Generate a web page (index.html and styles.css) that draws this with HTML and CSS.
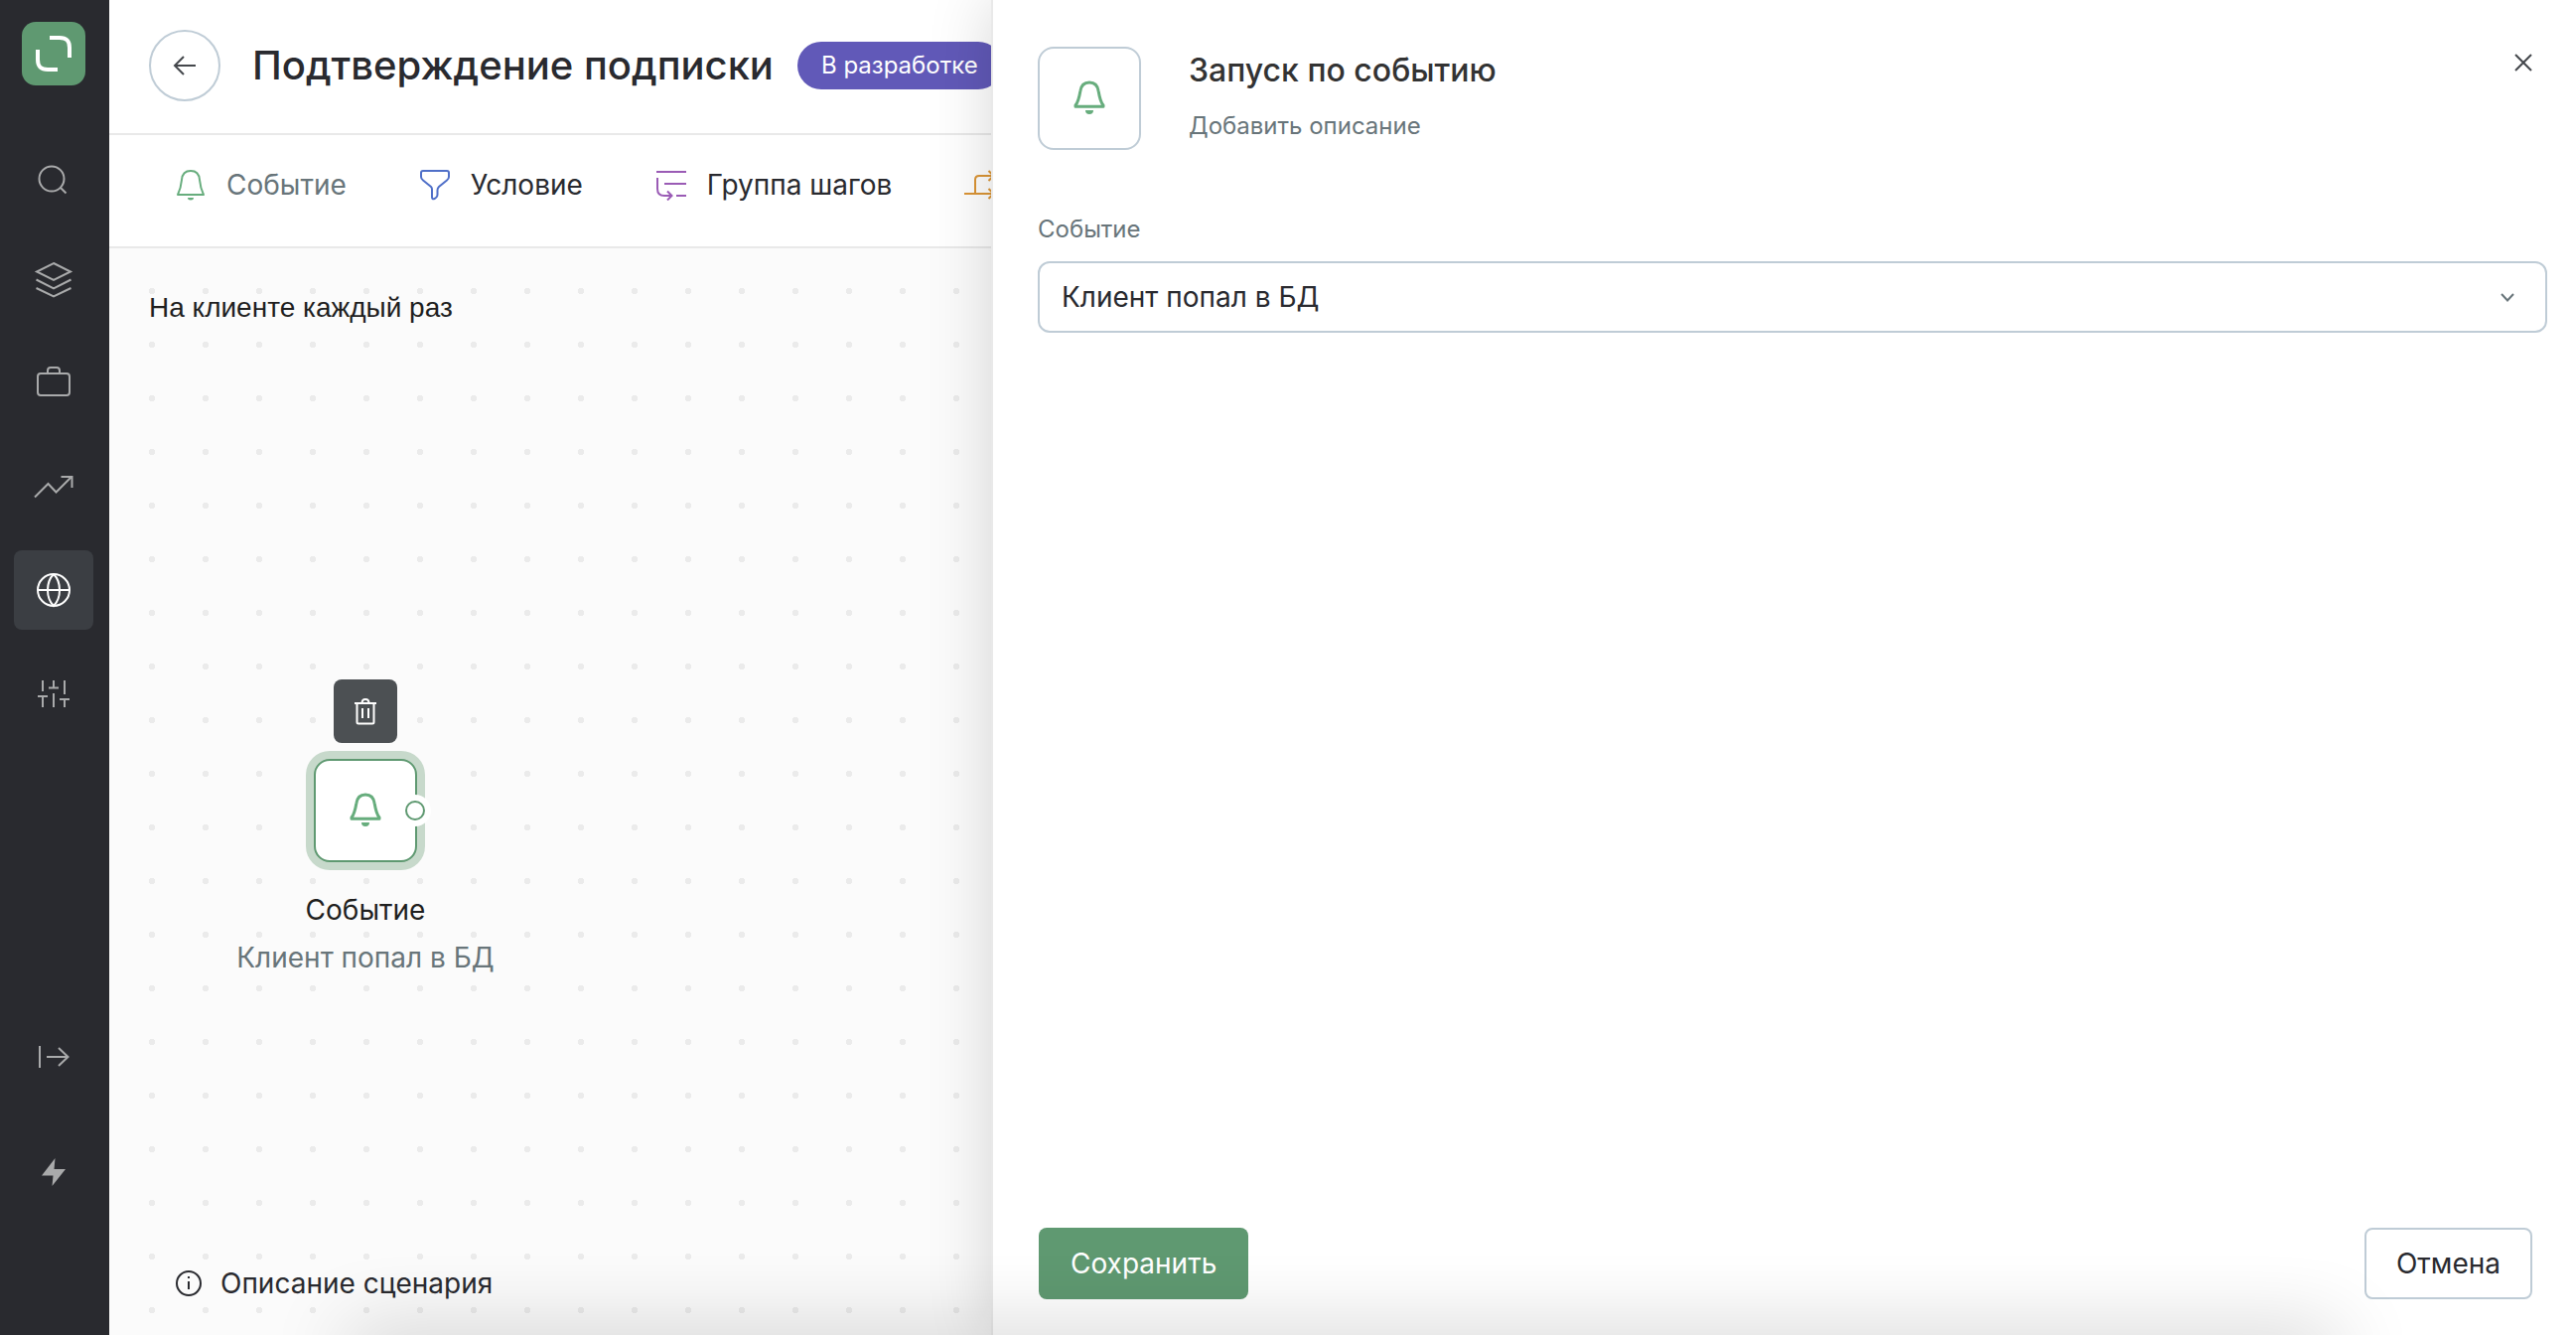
FILE: index.html
```html
<!DOCTYPE html>
<html lang="ru">
<head>
<meta charset="utf-8">
<meta name="viewport" content="width=device-width, initial-scale=1">
<title>Подтверждение подписки</title>
<link rel="stylesheet" href="styles.css">
</head>
<body>
<svg class="symbols" aria-hidden="true">
  <symbol id="bell" viewBox="0 0 32 36">
    <path d="M2 25C5 21.500 5.800 17 6.800 11C7.600 5 11 2 16 2C21 2 24.400 5 25.200 11C26.200 17 27 21.500 30 25V26.200H2Z" fill="none" stroke="currentColor" stroke-width="3" stroke-linejoin="round"/>
    <path d="M12 30H20A4 4 0 0 1 12 30Z" fill="currentColor" stroke="none"/>
  </symbol>
  <symbol id="bell-thin" viewBox="0 0 32 36">
    <path d="M3 28C6 22 6.500 18 7 13C7.500 7 10 4 16 4C22 4 24.500 7 25 13C25.500 18 26 22 29 28Z" fill="none" stroke="currentColor" stroke-width="2" stroke-linejoin="round"/>
    <path d="M13 31H19A3 2.500 0 0 1 13 31Z" fill="currentColor" stroke="none"/>
  </symbol>
</svg>
<div class="app">
  <nav class="sidebar" aria-label="Разделы">
    <a class="logo" href="#" aria-label="Главная">
      <svg width="36" height="36" viewBox="0 0 36 36"><path d="M14 2H24C31 2 34 5 34 12V22M2 14V24C2 31 5 34 12 34H22"/></svg>
    </a>
    <div class="nav-group">
      <a class="nav-item" href="#" aria-label="Поиск"><svg width="44" height="44" viewBox="0 0 44 44"><circle cx="20" cy="24" r="12.500"/><path d="M29 33L34.500 38.500"/></svg></a>
      <a class="nav-item" href="#" aria-label="Слои"><svg width="44" height="44" viewBox="0 0 44 44"><path d="M22 5L39 13.500L22 22L5 13.500ZM4.500 21.500L22 30.500L39.500 21.500M4.500 30L22 38.500L39.500 30"/></svg></a>
      <a class="nav-item" href="#" aria-label="Кампании"><svg width="44" height="44" viewBox="0 0 44 44"><rect x="6" y="12" width="32" height="22" rx="3"/><path d="M16 12V9Q16 6 19 6H25Q28 6 28 9V12"/></svg></a>
      <a class="nav-item" href="#" aria-label="Отчёты"><svg width="44" height="44" viewBox="0 0 44 44"><path d="M3 32.500L16.500 19L24.500 27.500L40 12M29.500 12H40.500V23"/></svg></a>
      <a class="nav-item nav-item-active" href="#" aria-label="Интеграции" aria-current="page"><svg width="44" height="44" viewBox="0 0 44 44"><circle cx="22" cy="22" r="16"/><path d="M6 22H38M22 6C14 14 14 30 22 38C30 30 30 14 22 6"/></svg></a>
      <a class="nav-item" href="#" aria-label="Настройки"><svg width="44" height="44" viewBox="0 0 44 44"><path d="M11 9V20M11 25V36M6 25H16M22 9V16.500M17 16.500H27M22 22V36M33 9V23M33 28V36M28 28H38"/></svg></a>
    </div>
    <div class="nav-group nav-group-bottom">
      <a class="nav-item" href="#" aria-label="Развернуть меню"><svg width="44" height="44" viewBox="0 0 44 44"><path d="M8 11V33M15 22H36M27 13L36.500 22L27 31"/></svg></a>
      <a class="nav-item" href="#" aria-label="Обновления"><svg width="44" height="44" viewBox="0 0 44 44"><path class="solid" d="M23.500 8L10 25.500H21.500L20.500 36L34 19H22.500Z"/></svg></a>
    </div>
  </nav>

  <main class="workspace">
    <header class="header">
      <button class="back" type="button" aria-label="Назад"><svg width="24" height="24" viewBox="0 0 24 24"><path d="M23 12H2M11 3L2 12L11 21"/></svg></button>
      <h1 class="title">Подтверждение подписки</h1>
      <span class="status">В разработке</span>
    </header>
    <div class="toolbar">
      <button class="tool tool-muted" type="button"><svg class="green" width="32" height="36"><use href="#bell-thin"/></svg>Событие</button>
      <button class="tool" type="button"><svg class="blue" width="32" height="32" viewBox="0 0 32 32"><path d="M4 2H28Q30 2 30 4V8Q30 10 28 11.500L20 18Q18.500 19.500 18.500 21.500V26Q18.500 28 17 29L15.500 30Q13 31 13 28.500V20.500Q13 19 12 18L4 11.500Q2 10 2 8V4Q2 2 4 2Z"/></svg>Условие</button>
      <button class="tool" type="button"><svg class="purple" width="32" height="32" viewBox="0 0 32 32"><path d="M1 3H31M9 15H31M2 9V20C2 25 5 27 9 27H16M12 22.500L16.500 27L12 31.500M21 27H31"/></svg>Группа шагов</button>
      <button class="tool" type="button" aria-label="Разветвление"><svg class="orange" width="32" height="32" viewBox="0 0 32 32"><path d="M0 25H29M11 25V11Q11 7 15 7H29M24.500 2L29.500 7L24.500 12M24.500 20L29.500 25L24.500 30"/></svg></button>
    </div>
    <section class="canvas">
      <h2 class="trigger">На клиенте каждый раз</h2>
      <div class="node">
        <button class="remove" type="button" aria-label="Удалить"><svg width="24" height="28" viewBox="0 0 24 28"><path d="M1 6H23M3.500 6V25Q3.500 26.500 5 26.500H19Q20.500 26.500 20.500 25V6M8.500 6Q8.500 2 12 2Q15.500 2 15.500 6M9 11V21M15 11V21"/></svg></button>
        <div class="node-tile"><svg class="green" width="32" height="36"><use href="#bell"/></svg><span class="port"></span></div>
        <div class="node-name">Событие</div>
        <div class="node-text">Клиент попал в БД</div>
      </div>
      <button class="about" type="button"><svg width="28" height="28" viewBox="0 0 28 28"><circle cx="14" cy="14" r="12"/><path d="M14 12V20M14 7V9"/></svg>Описание сценария</button>
    </section>
  </main>

  <aside class="panel">
    <form class="form">
      <header class="panel-head">
        <div class="panel-tile"><svg class="green" width="32" height="36"><use href="#bell"/></svg></div>
        <div class="panel-titles">
          <h2 class="panel-title">Запуск по событию</h2>
          <button class="panel-add" type="button">Добавить описание</button>
        </div>
        <button class="close" type="button" aria-label="Закрыть"><svg width="18" height="18" viewBox="0 0 18 18"><path d="M1 1L17 17M17 1L1 17"/></svg></button>
      </header>
      <label class="label" for="event">Событие</label>
      <div class="field">
        <select class="select" id="event"><option>Клиент попал в БД</option></select>
        <svg class="chevron" width="14" height="9" viewBox="0 0 14 9"><path d="M1 1L7 7.500L13 1"/></svg>
      </div>
      <footer class="actions">
        <button class="btn btn-primary" type="submit">Сохранить</button>
        <button class="btn btn-plain" type="button">Отмена</button>
      </footer>
    </form>
  </aside>
</div>
<div class="dock-shadow"></div>
</body>
</html>
```

FILE: styles.css
```css
* { box-sizing: border-box; }
body { margin: 0; font-family: Inter, "Liberation Sans", sans-serif; font-size: 28px; line-height: 36px; color: #292a2f; background: #fff; overflow: hidden; }
button, select { margin: 0; padding: 0; border: 0; background: none; font: inherit; color: inherit; }
h1, h2 { margin: 0; }
svg { display: block; flex: none; fill: none; stroke: currentColor; stroke-width: 2; }
.symbols { position: absolute; width: 0; height: 0; }
.green { color: #67ad7d; }
.blue { color: #4f6fc8; }
.purple { color: #9a5bb5; }
.orange { color: #dc9636; }

.app { display: grid; grid-template-columns: 110px minmax(0, 888px) minmax(0, 1fr); height: 100vh; }

.sidebar { display: flex; flex-direction: column; padding: 22px 16px 124px 14px; background: #292a2f; color: #a9aaab; }
.logo { display: flex; align-items: center; justify-content: center; width: 64px; height: 64px; margin-left: 8px; border-radius: 14px; background: #5f9971; color: #fff; }
.logo svg { stroke-width: 4; }
.nav-group { display: flex; flex-direction: column; gap: 24px; margin-top: 52px; }
.nav-group-bottom { gap: 36px; margin-top: auto; }
.nav-item { display: flex; align-items: center; justify-content: center; width: 80px; height: 80px; border-radius: 8px; color: inherit; }
.nav-item-active { background: #3b3e43; color: #fff; }
.solid { fill: currentColor; stroke: none; }

.workspace { display: flex; flex-direction: column; overflow: hidden; }
.header { display: flex; align-items: center; height: 136px; padding: 0 40px 2px; border-bottom: 2px solid #e9e9e9; white-space: nowrap; }
.back { display: flex; flex: none; align-items: center; justify-content: center; width: 72px; height: 72px; border: 2px solid #bfccd6; border-radius: 50%; color: #44474c; }
.title { margin-left: 32px; font-size: 40px; line-height: 48px; font-weight: 500; }
.status { flex: none; margin-left: 24px; padding: 6px 24px; border-radius: 24px; background: #6159b8; color: #fff; font-size: 24px; }
.toolbar { display: flex; gap: 73px; height: 114px; padding: 0 66px 12px; border-bottom: 2px solid #e9e9e9; }
.tool { display: flex; flex: none; align-items: center; gap: 20px; }
.tool-muted { color: #68757a; }

.canvas { position: relative; display: flex; flex: 1; flex-direction: column; justify-content: space-between; padding: 42px 40px 34px; background: #fbfbfb radial-gradient(circle, #ebebeb 0 3px, transparent 3px) 16px 16px / 54px 54px; }
.trigger { font-family: "Liberation Sans", sans-serif; font-size: 28px; font-weight: 400; line-height: 36px; color: #1f1f1f; }
.node { position: absolute; top: 434px; left: 108px; display: flex; flex-direction: column; align-items: center; width: 300px; }
.remove { display: flex; align-items: center; justify-content: center; width: 64px; height: 64px; border-radius: 8px; background: #4c5053; color: #fff; }
.node-tile { position: relative; display: flex; align-items: center; justify-content: center; width: 104px; height: 104px; margin: 16px 0 30px; border: 2px solid #5f9971; border-radius: 16px; background: #fff; box-shadow: 0 0 0 8px #c7d9cb; }
.port { position: absolute; top: 40px; right: -10px; width: 20px; height: 20px; border: 2px solid #5f9971; border-radius: 50%; background: #fff; box-shadow: 0 0 0 6px #fff; }
.node-name { color: #1f1f1f; }
.node-text { margin-top: 12px; color: #68757a; white-space: nowrap; }
.about { display: flex; align-items: center; align-self: flex-start; gap: 18px; margin-left: 26px; }

.panel { position: relative; border-left: 2px solid #e9e9e9; background: #fff; box-shadow: 0 0 60px rgba(0, 0, 0, .16); }
.form { display: flex; flex-direction: column; height: 100%; padding: 47px 29px 36px 45px; }
.panel-head { display: flex; align-items: flex-start; }
.panel-tile { display: flex; flex: none; align-items: center; justify-content: center; width: 104px; height: 104px; border: 2px solid #bfccd6; border-radius: 16px; }
.panel-titles { display: flex; flex: 1; flex-direction: column; align-items: flex-start; gap: 18px; margin-left: 48px; padding-top: 4px; }
.panel-title { font-size: 32px; font-weight: 500; line-height: 40px; color: #333; }
.panel-add { font-size: 24px; line-height: 36px; color: #68757a; }
.close { margin: 7px 15px 0 0; color: #44474c; }
.label { margin-top: 62px; font-size: 24px; line-height: 36px; color: #68757a; }
.field { position: relative; margin-top: 14px; }
.select { display: block; width: 100%; height: 72px; padding: 0 22px; border: 2px solid #bfccd6; border-radius: 12px; appearance: none; }
.chevron { position: absolute; top: 32px; right: 33px; color: #68757a; }
.actions { display: flex; justify-content: space-between; margin: auto 15px 0 1px; }
.btn { height: 72px; padding: 0 32px; border-radius: 8px; }
.btn-primary { background: #5f9971; color: #fff; }
.btn-plain { padding: 0 30px; border: 2px solid #bfccd6; background: #fff; }

.dock-shadow { position: fixed; right: 240px; bottom: -40px; left: 350px; height: 40px; box-shadow: 0 0 80px rgba(0, 0, 0, .24); pointer-events: none; }
```
